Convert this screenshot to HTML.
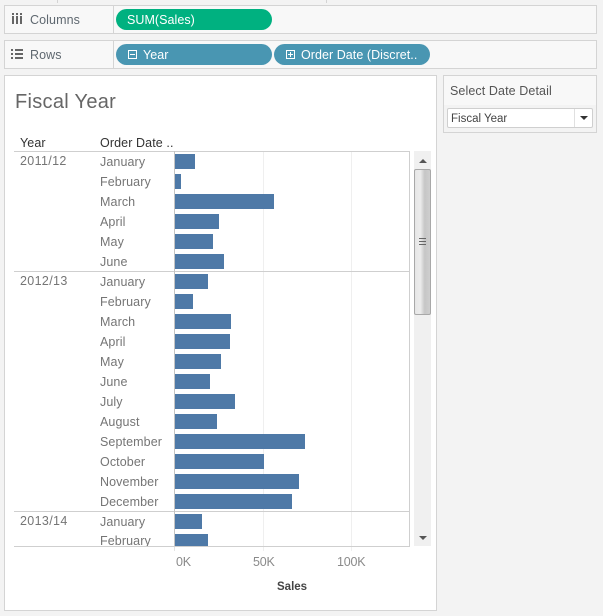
<!DOCTYPE html>
<html><head><meta charset="utf-8">
<style>
html,body{margin:0;padding:0}
body{width:603px;height:616px;background:#f3f3f3;position:relative;overflow:hidden;font-family:"Liberation Sans",sans-serif;font-size:12.5px;color:#555}
div{position:absolute;box-sizing:border-box;white-space:nowrap}
.shelf{left:4px;width:593px;background:#f8f8f8;border:1px solid #d4d4d4}
.pill{height:21px;border-radius:11px;color:#fff;line-height:22px;font-size:12.5px;letter-spacing:.05px}
.t{line-height:16px;letter-spacing:.1px}
.m{left:100px;color:#757575}
.y{left:20px;color:#757575;letter-spacing:.35px}
.b{left:175px;height:15px;background:#4e79a7}
.ln{background:#cfcfcf;height:1px}
.grid{background:#efefef;width:1px}
.box{width:9px;height:9px;border:1px solid #fff}
.box:before{content:"";position:absolute;left:1px;top:3px;width:5px;height:1px;background:#fff}
.plus:after{content:"";position:absolute;left:3px;top:1px;width:1px;height:5px;background:#fff}
.ic{background:#666}
</style></head><body>
<div style="left:57px;top:0;width:1px;height:3px;background:#d4d4d4"></div>
<div style="left:326px;top:0;width:1px;height:3px;background:#d4d4d4"></div>

<div class="shelf" style="top:5px;height:29px"></div>
<div style="left:113px;top:5px;width:1px;height:29px;background:#d4d4d4"></div>
<div class="ic" style="left:12px;top:16px;width:2px;height:8px"></div>
<div class="ic" style="left:12px;top:13px;width:2px;height:2px"></div>
<div class="ic" style="left:16px;top:16px;width:2px;height:8px"></div>
<div class="ic" style="left:16px;top:13px;width:2px;height:2px"></div>
<div class="ic" style="left:20px;top:16px;width:2px;height:8px"></div>
<div class="ic" style="left:20px;top:13px;width:2px;height:2px"></div>
<div class="t" style="left:30px;top:12px;color:#5f6870">Columns</div>
<div class="pill" style="left:116px;top:9px;width:156px;background:#00b180;padding-left:11px">SUM(Sales)</div>

<div class="shelf" style="top:40px;height:29px"></div>
<div style="left:113px;top:40px;width:1px;height:29px;background:#d4d4d4"></div>
<div class="ic" style="left:11px;top:49px;width:2px;height:2px"></div>
<div class="ic" style="left:15px;top:49px;width:8px;height:2px"></div>
<div class="ic" style="left:11px;top:53px;width:2px;height:2px"></div>
<div class="ic" style="left:15px;top:53px;width:8px;height:2px"></div>
<div class="ic" style="left:11px;top:57px;width:2px;height:2px"></div>
<div class="ic" style="left:15px;top:57px;width:8px;height:2px"></div>
<div class="t" style="left:30px;top:47px;color:#5f6870">Rows</div>
<div class="pill" style="left:116px;top:44px;width:156px;background:#4996b2;padding-left:27px">Year</div>
<div class="box" style="left:128px;top:50px"></div>
<div class="pill" style="left:274px;top:44px;width:156px;background:#4996b2;padding-left:27px">Order Date (Discret..</div>
<div class="box plus" style="left:286px;top:50px"></div>

<div style="left:4px;top:75px;width:433px;height:536px;background:#fff;border:1px solid #d4d4d4"></div>
<div style="left:15px;top:90px;font-size:20px;line-height:24px;color:#666;letter-spacing:.3px">Fiscal Year</div>

<div class="grid" style="left:263px;top:152px;height:394px"></div>
<div class="grid" style="left:351px;top:152px;height:394px"></div>
<div class="grid" style="left:174px;top:546px;height:5px;background:#e4e4e4"></div>
<div class="grid" style="left:263px;top:546px;height:5px"></div>
<div class="grid" style="left:351px;top:546px;height:5px"></div>

<div class="t" style="left:20px;top:135px;color:#333">Year</div>
<div class="t" style="left:100px;top:135px;color:#333">Order Date ..</div>

<div class="ln" style="left:14px;top:151px;width:396px"></div>
<div class="ln" style="left:14px;top:271px;width:396px"></div>
<div class="ln" style="left:14px;top:511px;width:396px"></div>
<div class="ln" style="left:14px;top:546px;width:396px"></div>
<div style="left:409px;top:151px;width:1px;height:396px;background:#cfcfcf"></div>
<div style="left:174px;top:151px;width:1px;height:395px;background:#c4c4c4"></div>

<div class="t y" style="top:153px">2011/12</div>
<div class="t y" style="top:273px">2012/13</div>
<div class="t y" style="top:513px">2013/14</div>

<div class="t m" style="top:154px">January</div>
<div class="t m" style="top:174px">February</div>
<div class="t m" style="top:194px">March</div>
<div class="t m" style="top:214px">April</div>
<div class="t m" style="top:234px">May</div>
<div class="t m" style="top:254px">June</div>
<div class="t m" style="top:274px">January</div>
<div class="t m" style="top:294px">February</div>
<div class="t m" style="top:314px">March</div>
<div class="t m" style="top:334px">April</div>
<div class="t m" style="top:354px">May</div>
<div class="t m" style="top:374px">June</div>
<div class="t m" style="top:394px">July</div>
<div class="t m" style="top:414px">August</div>
<div class="t m" style="top:434px">September</div>
<div class="t m" style="top:454px">October</div>
<div class="t m" style="top:474px">November</div>
<div class="t m" style="top:494px">December</div>
<div class="t m" style="top:514px">January</div>
<div class="t m" style="top:533px;height:13px;overflow:hidden">February</div>

<div class="b" style="top:154px;width:20px"></div>
<div class="b" style="top:174px;width:6px"></div>
<div class="b" style="top:194px;width:99px"></div>
<div class="b" style="top:214px;width:44px"></div>
<div class="b" style="top:234px;width:38px"></div>
<div class="b" style="top:254px;width:49px"></div>
<div class="b" style="top:274px;width:33px"></div>
<div class="b" style="top:294px;width:18px"></div>
<div class="b" style="top:314px;width:56px"></div>
<div class="b" style="top:334px;width:55px"></div>
<div class="b" style="top:354px;width:46px"></div>
<div class="b" style="top:374px;width:35px"></div>
<div class="b" style="top:394px;width:60px"></div>
<div class="b" style="top:414px;width:42px"></div>
<div class="b" style="top:434px;width:130px"></div>
<div class="b" style="top:454px;width:89px"></div>
<div class="b" style="top:474px;width:124px"></div>
<div class="b" style="top:494px;width:117px"></div>
<div class="b" style="top:514px;width:27px"></div>
<div class="b" style="top:534px;width:33px;height:12px"></div>

<div class="t" style="left:176px;top:554px;color:#8a8a8a;letter-spacing:-.2px">0K</div>
<div class="t" style="left:253px;top:554px;color:#8a8a8a;letter-spacing:-.2px">50K</div>
<div class="t" style="left:337px;top:554px;color:#8a8a8a;letter-spacing:-.2px">100K</div>
<div class="t" style="left:277px;top:579px;color:#444;font-weight:bold;font-size:11.5px;letter-spacing:0">Sales</div>

<!-- scrollbar -->
<div style="left:414px;top:151px;width:17px;height:395px;background:#f0f0f0"></div>
<div style="left:419px;top:159px;width:0;height:0;border-left:4px solid transparent;border-right:4px solid transparent;border-bottom:4px solid #555"></div>
<div style="left:419px;top:536px;width:0;height:0;border-left:4px solid transparent;border-right:4px solid transparent;border-top:4px solid #555"></div>
<div style="left:414px;top:169px;width:17px;height:146px;border:1px solid #a8a8a8;border-radius:2px;background:linear-gradient(to right,#e6e6e6,#ececec 35%,#c6c6c6 65%,#cfcfcf)"></div>
<div style="left:419px;top:238px;width:7px;height:1px;background:#666"></div>
<div style="left:419px;top:241px;width:7px;height:1px;background:#666"></div>
<div style="left:419px;top:244px;width:7px;height:1px;background:#666"></div>

<!-- filter -->
<div style="left:443px;top:75px;width:154px;height:58px;background:#f8f8f8;border:1px solid #d4d4d4"></div>
<div style="left:444px;top:105px;width:152px;height:27px;background:#f3f3f3"></div>
<div class="t" style="left:450px;top:83px;color:#555">Select Date Detail</div>
<div style="left:447px;top:108px;width:146px;height:20px;background:#fff;border:1px solid #cfcfcf;border-radius:2px"></div>
<div style="left:574px;top:109px;width:1px;height:18px;background:#e0e0e0"></div>
<div class="t" style="left:451px;top:111px;font-size:11.5px;color:#444;letter-spacing:0">Fiscal Year</div>
<div style="left:580px;top:116px;width:0;height:0;border-left:4px solid transparent;border-right:4px solid transparent;border-top:4px solid #333"></div>
</body></html>
